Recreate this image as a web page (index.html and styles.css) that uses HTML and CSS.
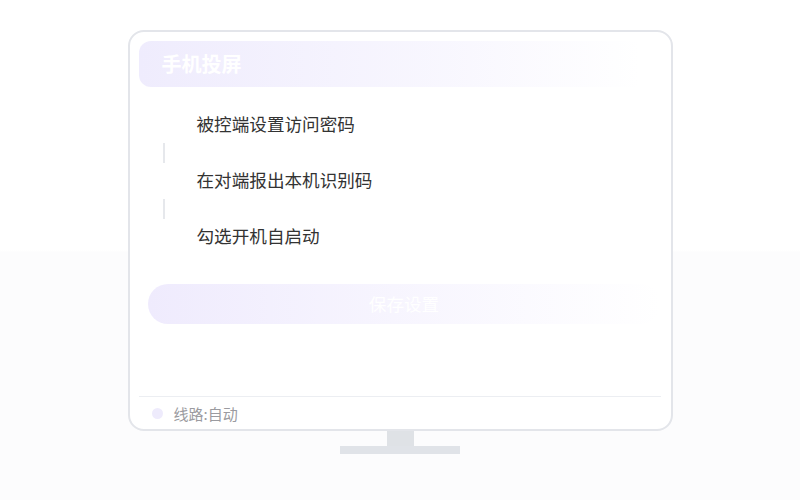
FILE: index.html
```html
<!DOCTYPE html>
<html lang="zh-CN">
<head>
<meta charset="utf-8">
<title>手机投屏</title>
<link rel="stylesheet" href="styles.css">
</head>
<body>
<div class="screen">
  <div class="monitor">
    <div class="header">手机投屏</div>
    <ul class="steps">
      <li class="step">被控端设置访问密码</li>
      <li class="connector"></li>
      <li class="step">在对端报出本机识别码</li>
      <li class="connector"></li>
      <li class="step">勾选开机自启动</li>
    </ul>
    <div class="save">保存设置</div>
    <div class="footer">
      <span class="dot"></span>
      <span class="route">线路:自动</span>
    </div>
  </div>
  <div class="neck"></div>
  <div class="base"></div>
</div>
</body>
</html>
```

FILE: styles.css
```css
html, body {
  margin: 0;
  padding: 0;
}

body {
  width: 800px;
  height: 500px;
  overflow: hidden;
  font-family: "Noto Sans CJK SC", "Noto Sans", sans-serif;
  background: linear-gradient(to bottom, #ffffff 0, #ffffff 250px, #fcfcfd 252px, #fcfcfd 500px);
}

.screen {
  display: flex;
  flex-direction: column;
  align-items: center;
  padding-top: 30px;
}

.monitor {
  box-sizing: border-box;
  width: 545px;
  height: 401px;
  border: 2px solid #e3e5ea;
  border-radius: 16px;
  background: #ffffff;
  padding: 9px 10px 0 9px;
  display: flex;
  flex-direction: column;
}

.header {
  height: 46px;
  border-radius: 12px;
  background: linear-gradient(90deg, #efecfd 0%, rgba(244, 242, 254, 0.6) 60%, rgba(255, 255, 255, 0) 96%);
  color: #ffffff;
  font-size: 20px;
  font-weight: 700;
  line-height: 46px;
  padding-left: 23px;
}

.steps {
  list-style: none;
  margin: 20px 0 0 0;
  padding: 0;
}

.step {
  height: 36px;
  line-height: 34px;
  padding-left: 58px;
  font-size: 17.6px;
  color: #333333;
}

.connector {
  width: 2px;
  height: 20px;
  margin-left: 24px;
  background: #e6e8ec;
}

.save {
  margin: 29px 0 0 9px;
  height: 40px;
  border-radius: 20px;
  background: linear-gradient(90deg, #efebfd 0%, rgba(243, 240, 254, 0.7) 45%, rgba(255, 255, 255, 0) 100%);
  color: #ffffff;
  font-size: 17.6px;
  line-height: 40px;
  text-align: center;
}

.footer {
  margin-top: auto;
  border-top: 1px solid #eceef2;
  height: 32px;
  display: flex;
  align-items: center;
  padding-left: 13px;
  gap: 11px;
}

.dot {
  width: 11px;
  height: 11px;
  border-radius: 50%;
  background: #eeebfc;
}

.route {
  font-size: 15px;
  color: #9b9ba0;
}

.neck {
  width: 27px;
  height: 15px;
  background: #dfe2e6;
}

.base {
  width: 120px;
  height: 8px;
  background: #e0e3e8;
}
```
